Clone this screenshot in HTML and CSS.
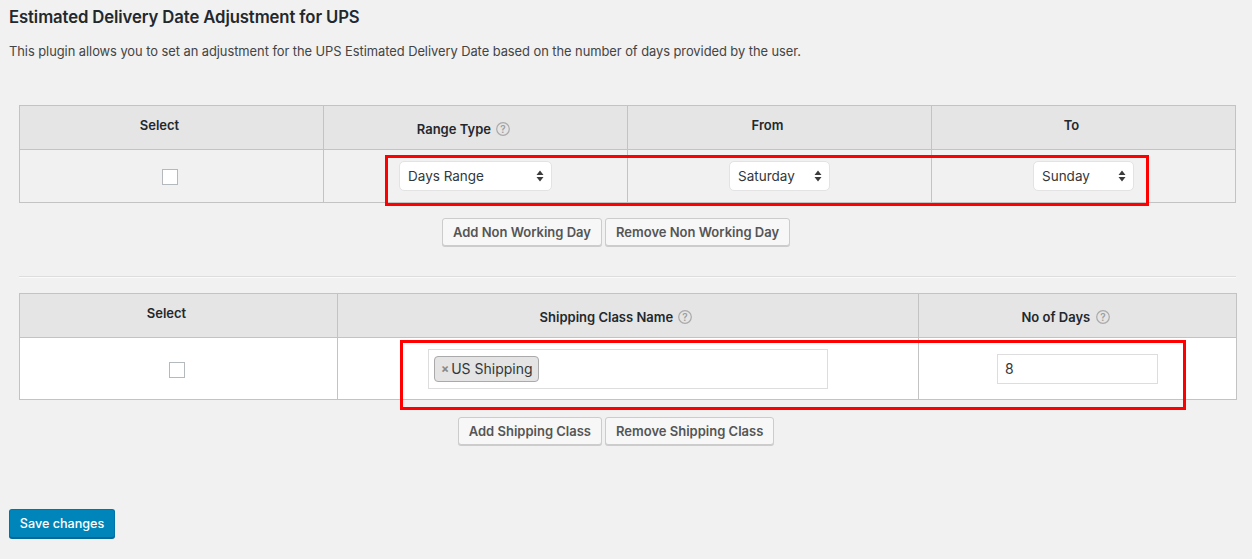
FILE: index.html
```html
<!DOCTYPE html>
<html>
<head>
<meta charset="utf-8">
<link rel="stylesheet" href="styles.css">
</head>
<body>
<div class="wrap">
  <h2 class="title">Estimated Delivery Date Adjustment for UPS</h2>
  <p class="desc">This plugin allows you to set an adjustment for the UPS Estimated Delivery Date based on the number of days provided by the user.</p>

  <table class="grid grid-days">
    <colgroup><col class="c4"><col class="c4"><col class="c4"><col class="c4"></colgroup>
    <thead>
      <tr>
        <th>Select</th>
        <th class="th-help">Range Type <span class="help"><svg width="14" height="14" viewBox="0 0 14 14"><circle cx="7" cy="7" r="6.3" fill="none" stroke="#aaa" stroke-width="1.2"/><text x="7" y="10.5" text-anchor="middle" font-size="10" font-family="Inter, sans-serif" fill="#9e9e9e">?</text></svg></span></th>
        <th>From</th>
        <th>To</th>
      </tr>
    </thead>
    <tbody>
      <tr class="row-grey">
        <td><span class="check"></span></td>
        <td><div class="select sel-range"><span>Days Range</span><svg class="arrows" width="8" height="12" viewBox="0 0 8 12"><path d="M4 0.5 L7.5 5 L0.5 5 Z M4 11.5 L7.5 7 L0.5 7 Z" fill="#3c3c3c"/></svg></div></td>
        <td><div class="select sel-day"><span>Saturday</span><svg class="arrows" width="8" height="12" viewBox="0 0 8 12"><path d="M4 0.5 L7.5 5 L0.5 5 Z M4 11.5 L7.5 7 L0.5 7 Z" fill="#3c3c3c"/></svg></div></td>
        <td><div class="select sel-day"><span>Sunday</span><svg class="arrows" width="8" height="12" viewBox="0 0 8 12"><path d="M4 0.5 L7.5 5 L0.5 5 Z M4 11.5 L7.5 7 L0.5 7 Z" fill="#3c3c3c"/></svg></div></td>
      </tr>
    </tbody>
  </table>
  <div class="btn-row row-1">
    <button class="btn">Add Non Working Day</button>
    <button class="btn">Remove Non Working Day</button>
  </div>

  <hr class="sep">

  <table class="grid grid-class">
    <colgroup><col class="cs"><col class="cm"><col class="cs"></colgroup>
    <thead>
      <tr>
        <th>Select</th>
        <th class="th-help">Shipping Class Name <span class="help"><svg width="14" height="14" viewBox="0 0 14 14"><circle cx="7" cy="7" r="6.3" fill="none" stroke="#aaa" stroke-width="1.2"/><text x="7" y="10.5" text-anchor="middle" font-size="10" font-family="Inter, sans-serif" fill="#9e9e9e">?</text></svg></span></th>
        <th class="th-help">No of Days <span class="help"><svg width="14" height="14" viewBox="0 0 14 14"><circle cx="7" cy="7" r="6.3" fill="none" stroke="#aaa" stroke-width="1.2"/><text x="7" y="10.5" text-anchor="middle" font-size="10" font-family="Inter, sans-serif" fill="#9e9e9e">?</text></svg></span></th>
      </tr>
    </thead>
    <tbody>
      <tr class="row-white">
        <td><span class="check"></span></td>
        <td><div class="multi"><span class="tag"><span class="tag-x">×</span>US Shipping</span></div></td>
        <td><div class="num">8</div></td>
      </tr>
    </tbody>
  </table>
  <div class="btn-row row-2">
    <button class="btn">Add Shipping Class</button>
    <button class="btn">Remove Shipping Class</button>
  </div>

  <button class="btn-primary">Save changes</button>

  <div class="mark mark-1"></div>
  <div class="mark mark-2"></div>
</div>
</body>
</html>
```

FILE: styles.css
```css
* { box-sizing: border-box; }
html, body {
  margin: 0;
  padding: 0;
  background: #f1f1f1;
}
body {
  font-family: Inter, "Open Sans", "Liberation Sans", sans-serif;
  color: #23282d;
  font-size: 13px;
}
.wrap {
  position: relative;
  width: 1252px;
  height: 559px;
  padding: 6px 9px 0 9px;
}
.title {
  margin: 0;
  font-size: 16.7px;
  line-height: 22px;
  font-weight: 600;
  color: #23282d;
  letter-spacing: -0.1px;
}
.desc {
  margin: 15px 0 0 0;
  font-size: 12.9px;
  line-height: 18px;
  color: #444;
  letter-spacing: -0.05px;
}
.grid {
  margin-left: 10px;
  width: 1217px;
  border-collapse: collapse;
  table-layout: fixed;
}
.grid-days { margin-top: 44px; }
.grid-class { margin-top: 15px; }
.c4 { width: 304px; }
.cs { width: 318px; }
.cm { width: 581px; }
.grid th, .grid td {
  border: 1px solid #c3c3c3;
  text-align: center;
  padding: 0;
}
.grid th {
  background: #e5e5e5;
  height: 44px;
  vertical-align: top;
  padding: 11px 24px 0 0;
  font-weight: 600;
  font-size: 13px;
  line-height: 16px;
  color: #23282d;
}
.grid th.th-help { padding-top: 15px; }
.help {
  display: inline-block;
  vertical-align: -2px;
  margin-left: 2px;
}
.help svg { display: block; }
.grid td { vertical-align: middle; }
.row-grey td { background: #f1f1f1; height: 53px; }
.row-white td { background: #fff; height: 62px; }
.check {
  display: inline-block;
  width: 16px;
  height: 16px;
  border: 1px solid #b4b9be;
  background: #fff;
  vertical-align: middle;
  margin: 2px 4px 0 0;
}
.select {
  display: inline-flex;
  align-items: center;
  justify-content: space-between;
  height: 30px;
  background: #fff;
  border: 1px solid #e3e3e3;
  border-radius: 5px;
  padding: 0 7px 0 8px;
  font-size: 13.5px;
  color: #32373c;
  vertical-align: middle;
}
.sel-range { width: 153px; }
.sel-day { width: 101px; }
.arrows { display: block; }
.multi {
  display: flex;
  align-items: center;
  width: 400px;
  height: 40px;
  margin: 0 auto;
  background: #fff;
  border: 1px solid #ddd;
  padding: 0 5px;
}
.tag {
  display: inline-flex;
  align-items: center;
  height: 26px;
  padding: 0 5px 0 6px;
  background: #e4e4e4;
  border: 1px solid #aaa;
  border-radius: 4px;
  font-size: 14px;
  color: #32373c;
}
.tag-x {
  color: #888;
  font-weight: 700;
  font-size: 12px;
  margin-right: 2px;
}
.num {
  width: 161px;
  height: 30px;
  margin: 0 auto;
  background: #fff;
  border: 1px solid #ddd;
  text-align: left;
  padding: 0 7px;
  line-height: 28px;
  font-size: 14px;
  color: #32373c;
}
.btn-row {
  display: flex;
  justify-content: center;
  gap: 3px;
  width: 1217px;
  margin-left: 10px;
  padding-right: 23px;
}
.row-1 { margin-top: 15px; }
.row-2 { margin-top: 17px; }
.btn {
  height: 28px;
  padding: 0 10px;
  background: #f7f7f7;
  border: 1px solid #ccc;
  border-radius: 3px;
  box-shadow: 0 1px 0 #ccc;
  font-family: inherit;
  font-size: 13px;
  font-weight: 600;
  color: #555;
  cursor: pointer;
}
.sep {
  margin: 30px 0 0 10px;
  width: 1217px;
  height: 0;
  border: 0;
  border-top: 1px solid #ddd;
  border-bottom: 1px solid #fafafa;
}
.btn-primary {
  display: block;
  margin-top: 64px;
  height: 29px;
  width: 106px;
  padding: 0;
  background: #0085ba;
  border: 1px solid #0073aa;
  border-bottom-color: #006799;
  border-radius: 3px;
  box-shadow: 0 1px 0 #006799;
  color: #fff;
  font-family: inherit;
  font-size: 12.6px;
  font-weight: 500;
  cursor: pointer;
}
.mark {
  position: absolute;
  border: 3px solid #ff0000;
  pointer-events: none;
}
.mark-1 { left: 385px; top: 155px; width: 764px; height: 51px; }
.mark-2 { left: 400px; top: 340px; width: 786px; height: 70px; }
```
